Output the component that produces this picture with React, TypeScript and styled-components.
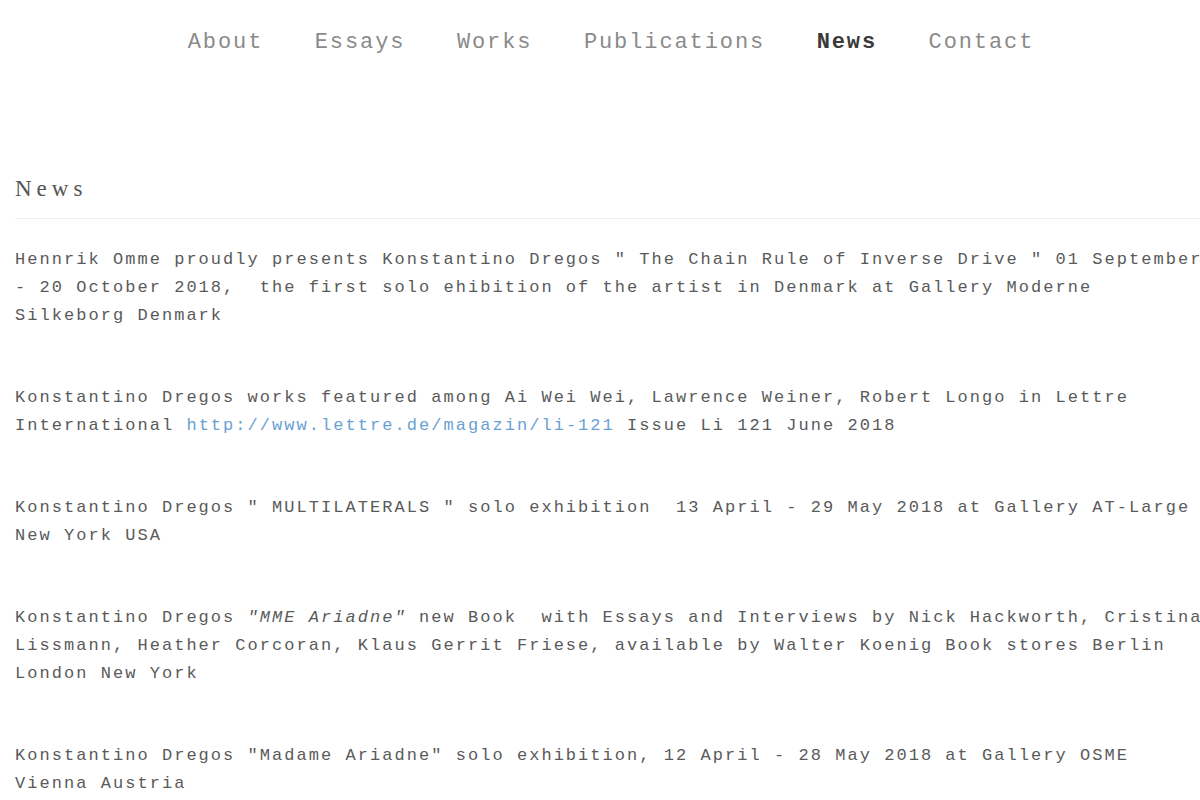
import React from "react";
import styled, { createGlobalStyle } from "styled-components";

const GlobalStyle = createGlobalStyle`
  html, body {
    margin: 0;
    padding: 0;
    background: #ffffff;
    overflow-x: hidden;
  }
  body {
    font-family: "Liberation Mono", "Courier New", monospace;
  }
`;

const Page = styled.div`
  display: flex;
  flex-direction: column;
`;

const Nav = styled.nav`
  display: flex;
  justify-content: center;
  gap: 51.5px;
  padding: 28px 0 0 22px;
`;

const NavItem = styled.a<{ $active?: boolean }>`
  font-family: "Liberation Mono", "Courier New", monospace;
  font-size: 22px;
  line-height: 30px;
  letter-spacing: 1.9px;
  color: ${(p) => (p.$active ? "#3a3a3a" : "#8a8a8a")};
  font-weight: ${(p) => (p.$active ? 700 : 400)};
  text-decoration: none;
  cursor: pointer;
`;

const Main = styled.main`
  width: 1193px;
  padding-left: 15px;
  margin-top: 118px;
`;

const Title = styled.h1`
  margin: 0 0 27px 0;
  padding-bottom: 16px;
  border-bottom: 1px solid #eeeeee;
  font-family: "Liberation Serif", "Times New Roman", serif;
  font-weight: 400;
  font-size: 23px;
  line-height: 26.4px;
  letter-spacing: 5px;
  color: #555555;
`;

const Entry = styled.p`
  margin: 0 0 54px 0;
  font-family: "Liberation Mono", "Courier New", monospace;
  font-size: 17px;
  line-height: 28px;
  letter-spacing: 0.12em;
  color: #5a5a5a;
  white-space: pre-wrap;
`;

const Link = styled.a`
  color: #6a9fd2;
  text-decoration: none;
`;

const Em = styled.em`
  font-style: italic;
`;

const navItems = ["About", "Essays", "Works", "Publications", "News", "Contact"];

export default function App() {
  return (
    <Page>
      <GlobalStyle />
      <Nav>
        {navItems.map((item) => (
          <NavItem key={item} $active={item === "News"}>
            {item}
          </NavItem>
        ))}
      </Nav>
      <Main>
        <Title>News</Title>
        <Entry>
          {
            'Hennrik Omme proudly presents Konstantino Dregos " The Chain Rule of Inverse Drive " 01 September - 20 October 2018,  the first solo ehibition of the artist in Denmark at Gallery Moderne Silkeborg Denmark'
          }
        </Entry>
        <Entry>
          {"Konstantino Dregos works featured among Ai Wei Wei, Lawrence Weiner, Robert Longo in Lettre International "}
          <Link href="#">{"http://www.lettre.de/magazin/li-121"}</Link>
          {" Issue Li 121 June 2018"}
        </Entry>
        <Entry>
          {'Konstantino Dregos " MULTILATERALS " solo exhibition  13 April - 29 May 2018 at Gallery AT-Large New York USA'}
        </Entry>
        <Entry>
          {"Konstantino Dregos "}
          <Em>{'"MME Ariadne"'}</Em>
          {
            " new Book  with Essays and Interviews by Nick Hackworth, Cristina Lissmann, Heather Corcoran, Klaus Gerrit Friese, available by Walter Koenig Book stores Berlin London New York"
          }
        </Entry>
        <Entry>
          {'Konstantino Dregos "Madame Ariadne" solo exhibition, 12 April - 28 May 2018 at Gallery OSME Vienna Austria'}
        </Entry>
      </Main>
    </Page>
  );
}
